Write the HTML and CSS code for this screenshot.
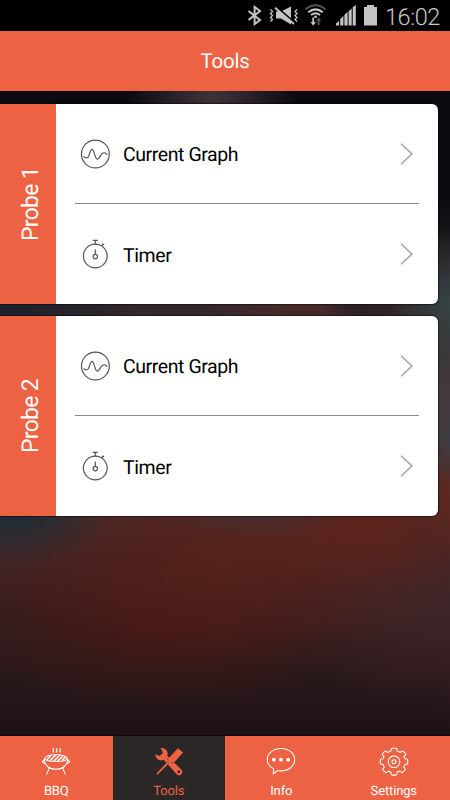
FILE: index.html
```html
<!DOCTYPE html>
<html lang="en">
<head>
    <meta charset="UTF-8">
    <meta name="viewport" content="width=device-width, initial-scale=1.0">
    <title>Tools</title>
    <link rel="stylesheet" href="styles.css">
</head>
<body>

    <!-- Shared icons -->
    <svg class="icon-defs" width="0" height="0">
        <symbol id="graph" viewBox="0 0 30 30">
            <circle cx="15.4" cy="15" r="13.9" />
            <path d="M3.6 17.2C4.9 19.6 7.9 19.6 8.9 16.6C10.1 13 10.6 10.4 12 10.4C14.4 10.4 14.7 20.2 17.4 20.2C19.8 20.2 20.4 14 23.6 13.8C25.4 13.6 26.4 14.4 27.2 15.8" />
        </symbol>
        <symbol id="timer" viewBox="0 0 30 30">
            <circle cx="15.3" cy="17" r="11.9" />
            <path d="M12.8 1.3H17.8M15.3 1.3V5.2M21.5 6.8L23.2 5M22.4 4.6L24 6M15.3 10.5V15.4" />
            <circle cx="15.3" cy="17.6" r="2.2" />
        </symbol>
        <symbol id="chevron" viewBox="0 0 14 24">
            <path d="M1 1.7L12 12L1 22.2" />
        </symbol>
    </svg>

    <div class="status-bar">
        <svg width="210" height="31" viewBox="240 0 210 31">
            <!-- Bluetooth -->
            <path class="line" d="M248.5 11L260 20L254.6 24V7L260 11L248.5 20" />
            <!-- Vibrate / muted speaker -->
            <path class="thin" d="M270.5 9.5l2 2-2 2 2 2-2 2 2 2-2 2M297 9.5l-2 2 2 2-2 2 2 2-2 2 2 2" />
            <path class="fill" d="M276 11.5h5l10-5v18l-10-6h-5z" />
            <path d="M277 7.5L295 23" stroke="#000" stroke-width="2" />
            <path class="line" d="M275 7.8L294 24" />
            <!-- Wifi -->
            <path class="line dim" d="M305.5 9.2Q315.5 1.2 325.5 9.2" />
            <path class="line" d="M308.2 12.2Q315.5 6.5 322.8 12.2M311 15Q315.5 11.5 320 15" />
            <circle class="fill" cx="315.5" cy="16.8" r="1.4" />
            <path class="fill" d="M312.3 17.5h1.8v4.5h1.8l-2.7 3.8-2.7-3.8h1.8z" />
            <path class="fill dim-fill" d="M317.6 25h2v-4h1.8l-2.8-3.8-2.8 3.8h1.8z" />
            <!-- Signal -->
            <path class="fill" d="M336 25.5v-2l3-2.6v4.6zM340.2 25.5v-6.2l3.2-3.5v9.7zM344.4 25.5V15l3.2-3.2v13.7zM348.6 25.5V11.3l3.1-2.9v17.1zM352.7 25.5V7.2l3.1-2.2v20.5z" />
            <!-- Battery -->
            <path class="fill" d="M364 7h3V5h7v2h3v18.5h-13z" />
        </svg>
        <span class="clock">16:02</span>
    </div>

    <div class="header">Tools</div>

    <div class="content">
        <div class="card">
            <div class="probe"><span>Probe 1</span></div>
            <div class="card-body">
                <div class="row">
                    <svg class="row-icon"><use href="#graph" /></svg>
                    <span class="row-label">Current Graph</span>
                    <svg class="arrow"><use href="#chevron" /></svg>
                </div>
                <div class="row">
                    <svg class="row-icon"><use href="#timer" /></svg>
                    <span class="row-label">Timer</span>
                    <svg class="arrow"><use href="#chevron" /></svg>
                </div>
            </div>
        </div>

        <div class="card">
            <div class="probe"><span>Probe 2</span></div>
            <div class="card-body">
                <div class="row">
                    <svg class="row-icon"><use href="#graph" /></svg>
                    <span class="row-label">Current Graph</span>
                    <svg class="arrow"><use href="#chevron" /></svg>
                </div>
                <div class="row">
                    <svg class="row-icon"><use href="#timer" /></svg>
                    <span class="row-label">Timer</span>
                    <svg class="arrow"><use href="#chevron" /></svg>
                </div>
            </div>
        </div>
    </div>

    <!-- Bottom Navigation -->
    <div class="nav">
        <div class="nav-item">
            <svg class="nav-icon" viewBox="0 0 30 30">
                <path d="M3.2 12.2C5 6.6 25 6.6 26.8 12.2C25 15.8 5 15.8 3.2 12.2zM2.8 12.2C3 19 8 23 15 23S27 19 27.2 12.2M3 13L.8 15.2L3.2 17.2M27 13L29.2 15.2L26.8 17.2M8.2 21.5L5 28.8M21.8 21.5L25 28.8" />
                <path d="M5.6 13L9.4 9.2M9 14L14.5 8.5M12.8 14.5L18.6 8.7M17 14.3L22 9.5M21.5 13.7L24.8 10.4" stroke-width="1.5" />
                <path d="M11.5 1.2q1.8 1.1.7 2.2t.5 2M15 1.2q1.8 1.1.7 2.2t.5 2M18.5 1.2q1.8 1.1.7 2.2t.5 2" />
            </svg>
            <span>BBQ</span>
        </div>
        <div class="nav-item active">
            <svg class="nav-icon" viewBox="0 0 30 30">
                <path class="solid" d="M24.2 1.2L29.6 5.8L20 16.2L16.6 16.8L14.4 14.6L14.8 11.5z" />
                <path class="solid" d="M15.5 16.2L3.8 28L1.8 28.8L2.5 26.8L14 14.8z" />
                <path class="solid" d="M6 1.3C9.6.4 13.8 3 13.6 7.4L13.3 9.4L27.7 23.2A3.4 3.4 0 0 1 22.9 28.2L9.7 13.4C5.2 14.8 1.1 12.2.7 7.4L5.2 9.3L8.7 6.3L7.7 3.2z" />
                <path class="gap" d="M13 15.2L15.3 17.5M12.5 11.5L14.8 14M16.7 16.8L19.3 16" />
                <circle class="hole" cx="25.2" cy="25.5" r="1.4" />
            </svg>
            <span>Tools</span>
        </div>
        <div class="nav-item">
            <svg class="nav-icon" viewBox="0 0 30 30">
                <path d="M7.4 22.4C3.3 20.4.8 17.1.8 13.2C.8 6.6 7.1 1.5 15 1.5S29.2 6.6 29.2 13.2S22.9 24.7 15 24.7C13.8 24.7 12.6 24.6 11.5 24.4L7.1 27.7z" />
                <circle class="solid" cx="7.6" cy="13.1" r="2" />
                <circle class="solid" cx="15" cy="13.1" r="2" />
                <circle class="solid" cx="22.4" cy="13.1" r="2" />
            </svg>
            <span>Info</span>
        </div>
        <div class="nav-item">
            <svg class="nav-icon" viewBox="0 0 30 30">
                <path stroke-linejoin="round" d="M13 1.2H17Q17.8 1.2 17.9 2L18.2 4.2Q20.2 4.7 21.4 5.7L23.2 4.4Q24 3.9 24.7 4.6L26.9 6.8Q27.5 7.5 26.9 8.2L25.3 9.9Q26 11 26.2 12.1L28.4 12.5Q29.2 12.6 29.2 13.4V16.8Q29.2 17.5 28.4 17.7L26.1 18.1Q25.8 19.5 25 20.7L26.4 22.6Q26.9 23.3 26.3 23.9L24.1 26.1Q23.4 26.8 22.6 26.3L20.8 24.9Q19.5 25.7 18.2 26L17.8 28.4Q17.6 29.1 16.9 29.1H13.1Q12.4 29.1 12.2 28.4L11.8 26Q10.5 25.7 9.2 24.9L7.4 26.3Q6.6 26.8 5.9 26.1L3.7 23.9Q3.1 23.3 3.6 22.6L5 20.7Q4.2 19.5 3.9 18.1L1.6 17.7Q.8 17.5.8 16.8V13.4Q.8 12.6 1.6 12.5L3.8 12.1Q4 11 4.7 9.9L3.1 8.2Q2.5 7.5 3.1 6.8L5.3 4.6Q6 3.9 6.8 4.4L8.6 5.7Q9.8 4.7 11.8 4.2L12.1 2Q12.2 1.2 13 1.2z" />
                <circle cx="15" cy="15.2" r="6" />
                <circle cx="15" cy="15.2" r="2.1" />
            </svg>
            <span>Settings</span>
        </div>
    </div>

</body>
</html>
```

FILE: styles.css
```css
/* Global Styles */
body {
    font-family: Roboto, sans-serif;
    text-rendering: geometricPrecision;
    margin: 0;
    height: 800px;
    display: flex;
    flex-direction: column;
    overflow: hidden;
    background: #000;
}

svg {
    display: block;
    fill: none;
}

.icon-defs {
    position: absolute;
}

/* Status Bar */
.status-bar {
    height: 31px;
    position: relative;
    display: flex;
    justify-content: flex-end;
    background: #000;
}

.status-bar .line {
    stroke: #c4c4c4;
    stroke-width: 2;
}

.status-bar .thin {
    stroke: #c4c4c4;
    stroke-width: 1.3;
}

.status-bar .fill {
    fill: #c4c4c4;
}

.status-bar .dim {
    stroke: #555;
}

.status-bar .dim-fill {
    fill: #555;
}

.clock {
    position: absolute;
    right: 10px;
    top: 2px;
    color: #c8c8c8;
    font-size: 23.5px;
    font-weight: 300;
    letter-spacing: -0.4px;
    line-height: 30px;
}

/* Header */
.header {
    height: 60px;
    line-height: 63px;
    background: #ee6244;
    color: #fff;
    font-size: 20.5px;
    letter-spacing: -0.2px;
    text-align: center;
}

/* Cards over the blurred backdrop */
.content {
    flex: 1;
    display: flex;
    flex-direction: column;
    gap: 12px;
    padding: 13px 12px 0 0;
    background:
        radial-gradient(ellipse 85px 50px at 212px 6px, #40343a, transparent),
        radial-gradient(ellipse 45px 50px at 365px 205px, #241e24, transparent),
        radial-gradient(ellipse 110px 50px at 310px 218px, #4a2a2b, transparent),
        radial-gradient(ellipse 150px 60px at 0 218px, #1a212b, transparent),
        radial-gradient(ellipse 60px 80px at 450px 215px, #364345, transparent),
        radial-gradient(ellipse 30px 50px at 450px 345px, #3b3c44, transparent),
        radial-gradient(ellipse 95px 50px at 16px 425px, #1c2c34, transparent),
        radial-gradient(ellipse 90px 22px at 258px 424px, #462f30, transparent),
        radial-gradient(ellipse 150px 70px at 365px 433px, #5e231a, transparent),
        radial-gradient(ellipse 40px 70px at 450px 395px, #5c2a24, transparent),
        radial-gradient(ellipse 240px 110px at 225px 465px, #56221b, transparent),
        radial-gradient(ellipse 200px 90px at 165px 525px, #441713, transparent),
        radial-gradient(ellipse 180px 130px at 450px 490px, #412629, transparent),
        linear-gradient(#0b0a10 0, #0b0b12 110px, #33272b 215px, #45393b 300px, #472a2b 430px, #391f22 510px, #2a191b 580px, #201115 644px);
}

.card {
    height: 200px;
    flex: none;
    display: flex;
    background: #fff;
    border-radius: 0 6px 6px 0;
    box-shadow: 0 0 1px 1px rgba(0, 0, 0, 0.45);
}

.probe {
    width: 56px;
    display: flex;
    align-items: center;
    justify-content: center;
    background: #ee6244;
    color: #fff;
    font-size: 23px;
    letter-spacing: -0.7px;
}

.probe span {
    writing-mode: vertical-rl;
    transform: rotate(180deg);
    margin-left: 4px;
}

.card-body {
    flex: 1;
    padding: 0 19px;
}

.row {
    height: 100px;
    box-sizing: border-box;
    display: flex;
    align-items: center;
    padding: 0 5px;
    color: #000;
    font-size: 19.5px;
    letter-spacing: -0.42px;
}

.row:first-child {
    border-bottom: 1px solid #888;
}

.row-icon {
    width: 30px;
    height: 30px;
    stroke: #555;
    stroke-width: 1.2;
}

.row-label {
    flex: 1;
    margin-left: 13px;
    padding-top: 2px;
}

.arrow {
    width: 14px;
    height: 24px;
    stroke: #a0a0a0;
    stroke-width: 1.4;
}

/* Bottom Navigation */
.nav {
    height: 64px;
    display: flex;
    border-top: 1px solid #0c0a14;
    background: #ee6244;
}

.nav-item {
    flex: 1;
    display: flex;
    flex-direction: column;
    align-items: center;
    color: #fff;
    font-size: 13px;
    letter-spacing: -0.15px;
    line-height: 16px;
}

.nav-item.active {
    background: #2a2726;
    color: #ee6244;
}

.nav-icon {
    width: 30px;
    height: 30px;
    margin: 11px 0 8px;
    stroke: currentColor;
    stroke-width: 1.1;
}

.nav-icon .solid {
    fill: currentColor;
    stroke: none;
}

.nav-icon .gap {
    stroke: #2a2726;
    stroke-width: 0.6;
}

.nav-icon .hole {
    fill: #2a2726;
    stroke: none;
}
```
